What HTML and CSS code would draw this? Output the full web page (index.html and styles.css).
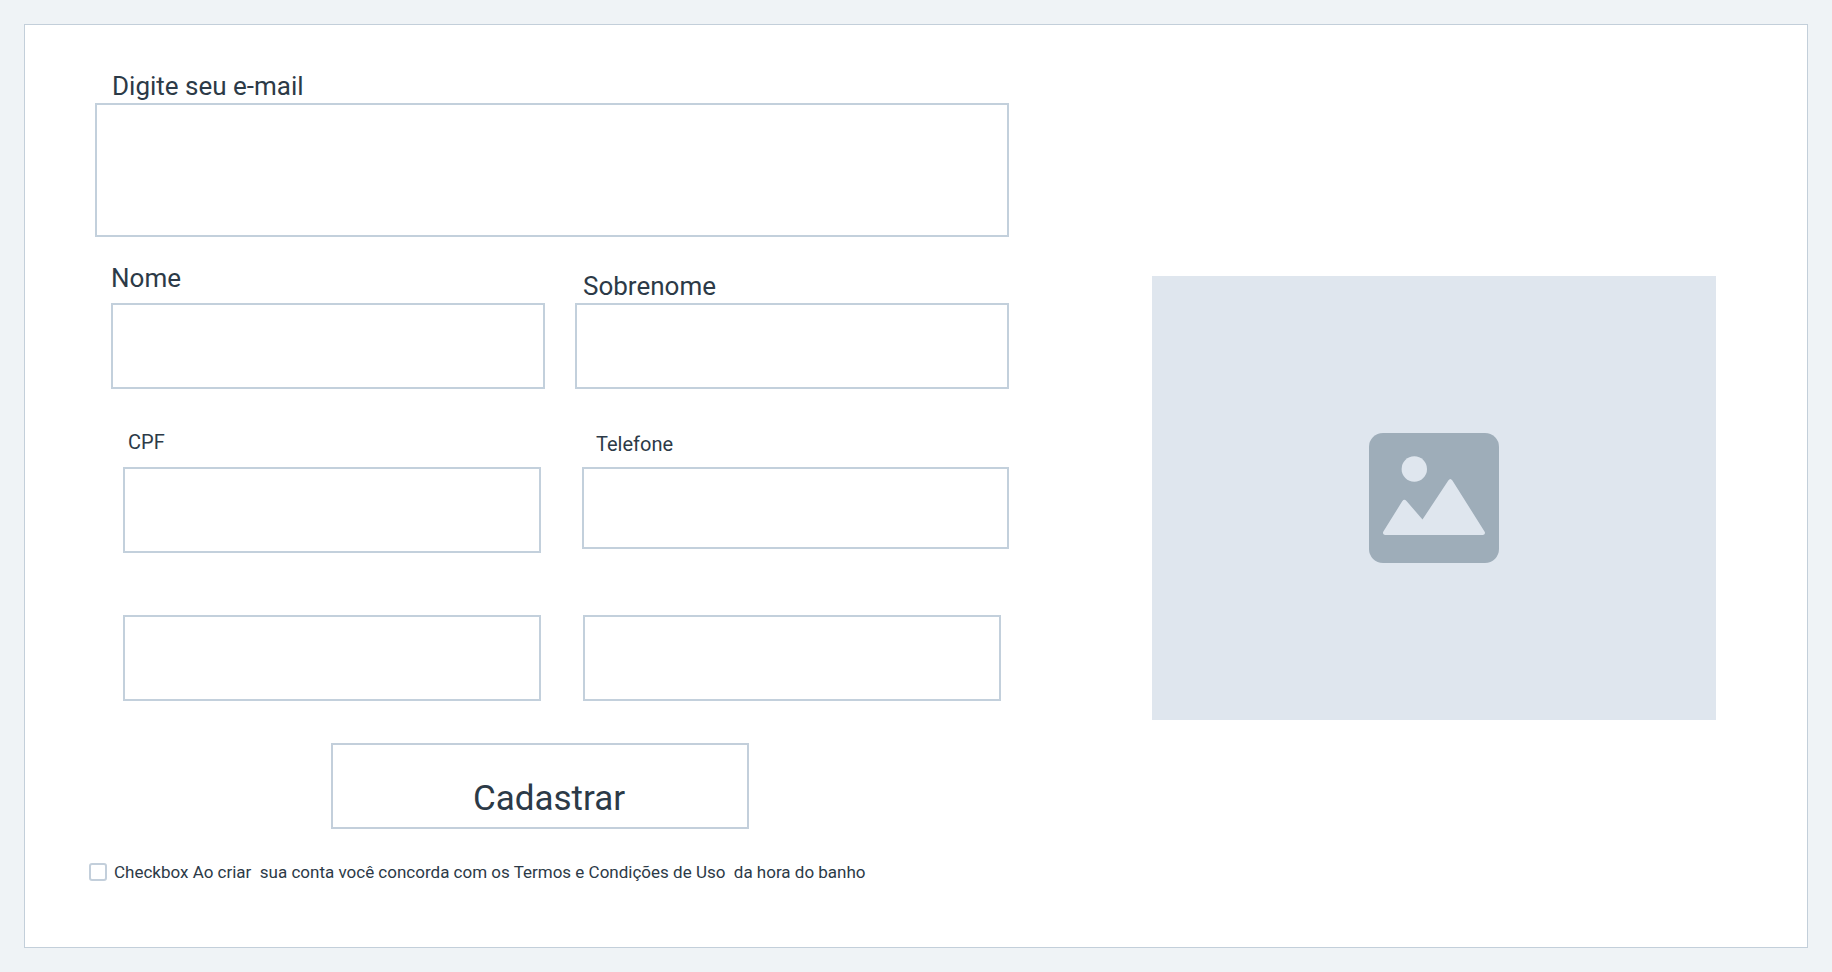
FILE: index.html
```html
<!DOCTYPE html>
<html lang="pt-BR">
<head>
<meta charset="utf-8">
<meta name="viewport" content="width=device-width, initial-scale=1">
<title>Cadastro</title>
<link rel="stylesheet" href="styles.css">
</head>
<body class="page">
<main class="panel">
  <form class="form">
    <div class="field field-email">
      <label class="label label-inset" for="email">Digite seu e-mail</label>
      <input class="input input-tall" id="email" type="email">
    </div>
    <div class="row row-name">
      <div class="field field-spaced">
        <label class="label" for="nome">Nome</label>
        <input class="input" id="nome" type="text">
      </div>
      <div class="field">
        <label class="label label-indent" for="sobrenome">Sobrenome</label>
        <input class="input" id="sobrenome" type="text">
      </div>
    </div>
    <div class="row row-contact">
      <div class="field field-cpf">
        <label class="label label-small" for="cpf">CPF</label>
        <input class="input" id="cpf" type="text">
      </div>
      <div class="field field-phone">
        <label class="label label-small label-phone" for="telefone">Telefone</label>
        <input class="input input-short" id="telefone" type="tel">
      </div>
    </div>
    <div class="row row-extra">
      <input class="input" type="text" aria-label="Campo 1">
      <input class="input" type="text" aria-label="Campo 2">
    </div>
    <button class="submit" type="submit">Cadastrar</button>
    <div class="terms">
      <input class="check" id="termos" type="checkbox">
      <label class="terms-label" for="termos">Checkbox Ao criar  sua conta você concorda com os Termos e Condições de Uso  da hora do banho</label>
    </div>
  </form>
  <div class="picture">
    <svg class="picture-icon" viewBox="0 0 130 130" aria-hidden="true">
      <rect width="130" height="130" rx="14" fill="#9eadb9"/>
      <circle cx="45.300" cy="36" r="12.700" fill="#dfe6ee"/>
      <path d="M14.400 98.500L33.200 68.300Q35.200 65.500 37.500 68L53.500 86.500L79.300 47.500Q81.300 44.500 83.400 47.500L115.500 98.500Q117 101.200 114 102H16Q13 101.200 14.400 98.500Z" fill="#dfe6ee"/>
    </svg>
  </div>
</main>
</body>
</html>
```
FILE: styles.css
```css
*, *::before, *::after { box-sizing: border-box; }

.page {
  margin: 0;
  min-height: 100vh;
  padding: 24px;
  display: flex;
  background: #eff3f6;
  color: #2c3a47;
  font-family: Roboto, "Liberation Sans", sans-serif;
}

.panel {
  flex: 1;
  display: grid;
  grid-template-columns: 920fr 564fr;
  column-gap: 143px;
  align-items: start;
  padding: 45px 91px 45px 64px;
  background: #fff;
  border: 1px solid #c3cfda;
}

.form { display: flex; flex-direction: column; }

.field {
  display: flex;
  flex-direction: column;
  gap: 1px;
  min-width: 0;
}

.field-email { padding-left: 6px; }
.field-spaced { gap: 9px; }
.field-cpf { gap: 13px; }
.field-phone { gap: 11px; padding-top: 2px; }

.label { font-size: 26px; line-height: 32px; }
.label-inset { padding-left: 17px; }
.label-indent { padding: 8px 0 0 8px; }
.label-small { font-size: 20px; line-height: 24px; padding-left: 5px; }
.label-phone { padding-left: 14px; }

.input {
  width: 100%;
  height: 86px;
  padding: 0 16px;
  border: 2px solid #c3d0dc;
  border-radius: 0;
  background: #fff;
  color: inherit;
  font: inherit;
  font-size: 20px;
}

.input-tall { height: 134px; }
.input-short { height: 82px; }

.row { display: grid; align-items: start; }

.row-name {
  grid-template-columns: 1fr 1fr;
  column-gap: 30px;
  margin-top: 25px;
  padding-left: 22px;
}

.row-contact {
  grid-template-columns: 418fr 427fr;
  column-gap: 41px;
  margin-top: 41px;
  padding-left: 34px;
}

.row-extra {
  grid-template-columns: 1fr 1fr;
  column-gap: 42px;
  margin-top: 62px;
  padding: 0 8px 0 34px;
}

.submit {
  height: 86px;
  margin: 42px 260px 0 242px;
  padding: 24px 0 0 18px;
  border: 2px solid #c3cfdb;
  background: #fff;
  color: inherit;
  font: inherit;
  font-size: 35px;
}

.terms {
  display: flex;
  align-items: center;
  gap: 7px;
  margin-top: 31px;
}

.check {
  appearance: none;
  flex: none;
  width: 18px;
  height: 18px;
  margin: 0;
  border: 2px solid #c3cfdb;
  border-radius: 3px;
  background: #fff;
}

.check:checked { background: #9eadb9; }

.terms-label {
  font-size: 17px;
  line-height: 24px;
  white-space: pre-wrap;
}

.picture {
  display: grid;
  place-items: center;
  aspect-ratio: 564 / 444;
  margin-top: 206px;
  background: #dfe6ee;
}

.picture-icon { width: 130px; height: 130px; }
```
